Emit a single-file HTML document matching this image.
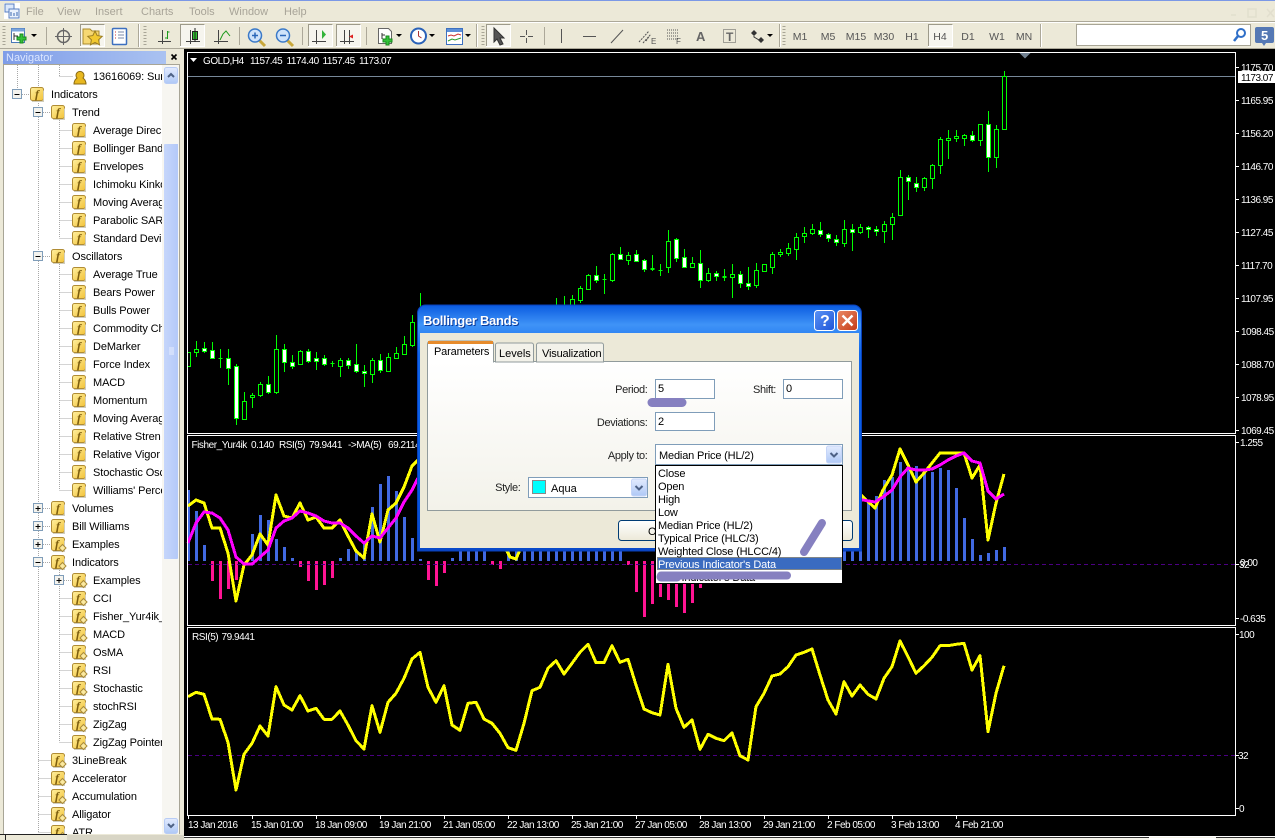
<!DOCTYPE html>
<html>
<head>
<meta charset="utf-8">
<title>Bollinger Bands</title>
<style>
html,body{margin:0;padding:0;background:#ece9d8;overflow:hidden;width:1275px;height:840px}
svg{display:block}
text{font-family:"Liberation Sans",sans-serif;font-size:11px;fill:#000;white-space:pre}
.m{fill:#a8a498}
.n{letter-spacing:-.1px}
.c{fill:#fff;font-size:10px;letter-spacing:-.5px}
.h{fill:#fff;font-size:10px;letter-spacing:-.45px}
.tf{fill:#555;font-size:10.5px;text-anchor:middle}
.l{letter-spacing:-.16px}
.r{text-anchor:end;fill:#222;letter-spacing:-.35px}
.fi{font-family:"Liberation Serif",serif;font-style:italic;font-weight:bold;font-size:12px;fill:#7d5e0e;text-anchor:middle}
.cr{shape-rendering:crispEdges}
</style>
</head>
<body>
<svg width="1275" height="840" viewBox="0 0 1275 840" xmlns="http://www.w3.org/2000/svg">
<defs>
<linearGradient id="yg" x1="0" y1="0" x2="1" y2="1"><stop offset="0" stop-color="#fff0a0"/><stop offset="1" stop-color="#f2c238"/></linearGradient>
<linearGradient id="tb" x1="0" y1="0" x2="0" y2="1"><stop offset="0" stop-color="#0a5be0"/><stop offset=".08" stop-color="#3f93f7"/><stop offset=".2" stop-color="#0f66ea"/><stop offset=".75" stop-color="#0258e2"/><stop offset="1" stop-color="#0a49c8"/></linearGradient>
<linearGradient id="nh" x1="0" y1="0" x2="1" y2="0"><stop offset="0" stop-color="#7f9de8"/><stop offset="1" stop-color="#aac2f1"/></linearGradient>
<linearGradient id="sb" x1="0" y1="0" x2="1" y2="0"><stop offset="0" stop-color="#c6d6fb"/><stop offset="1" stop-color="#b4c9f8"/></linearGradient>
<linearGradient id="cb" x1="0" y1="0" x2="0" y2="1"><stop offset="0" stop-color="#e3ebfe"/><stop offset="1" stop-color="#aec8f6"/></linearGradient>
<linearGradient id="pn" x1="0" y1="0" x2="0" y2="1"><stop offset="0" stop-color="#fff"/><stop offset="1" stop-color="#f3f2ea"/></linearGradient>
<linearGradient id="hb" x1="0" y1="0" x2="1" y2="1"><stop offset="0" stop-color="#5a93f5"/><stop offset="1" stop-color="#1f55d8"/></linearGradient>
<linearGradient id="xb" x1="0" y1="0" x2="1" y2="1"><stop offset="0" stop-color="#ea8a66"/><stop offset="1" stop-color="#c43a17"/></linearGradient>
<linearGradient id="bt" x1="0" y1="0" x2="0" y2="1"><stop offset="0" stop-color="#fff"/><stop offset="1" stop-color="#ece9d8"/></linearGradient>
<clipPath id="tc"><rect x="4" y="65" width="158" height="769"/></clipPath>
<clipPath id="cc"><rect x="188" y="53" width="1047" height="380"/></clipPath>
<g id="f"><rect x="-6.5" y="-6.5" width="13" height="13" rx="2" fill="url(#yg)" stroke="#b08c34"/><path d="M-5 7.5h11.5v-11" fill="none" stroke="#d0cdbd"/><text class="fi" x="0" y="4">f</text></g>
<g id="g"><rect x="-6.5" y="-6.5" width="13" height="13" rx="2" fill="url(#yg)" stroke="#b08c34"/><path d="M-5 7.5h11.5v-11" fill="none" stroke="#d0cdbd"/><text class="fi" x="-1" y="4">f</text><path d="M4.5 .5l3.500 3.500-3.500 3.500-3.500-3.500z" fill="#fbe9a0" stroke="#a88a3a"/></g>
<g id="mi"><rect x="-4.5" y="-4.5" width="9" height="9" fill="#f4f3ee" stroke="#7f9db9"/><path d="M-2.5 .5h5" stroke="#000" class="cr"/></g>
<g id="pl"><rect x="-4.5" y="-4.5" width="9" height="9" fill="#f4f3ee" stroke="#7f9db9"/><path d="M-2.5 .5h5M0 -2v5" stroke="#000" class="cr"/></g>
<g id="ab"><rect x="-7" y="-8.5" width="15" height="17" rx="2" fill="url(#cb)" stroke="#c5d5f8"/><path d="M-3 -1.5l3.500 3.500 3.500-3.500" fill="none" stroke="#4d6185" stroke-width="2"/></g>
</defs>

<rect width="1275" height="840" fill="#ece9d8"/>
<rect width="1275" height="1" fill="#7b98e6"/>

<!-- app icon -->
<rect x="4" y="3" width="16" height="16" fill="#fff"/>
<rect x="5" y="4" width="9" height="8" fill="#dce8fb" stroke="#5a7fc0"/>
<rect x="9" y="9" width="10" height="9" fill="#eaf1fd" stroke="#5a7fc0"/>
<path d="M11 12v4M14 13v3M17 12v4" stroke="#3a66b0"/>

<!-- menu -->
<text class="m" x="26" y="15">File</text>
<text class="m" x="57" y="15">View</text>
<text class="m" x="95" y="15">Insert</text>
<text class="m" x="141" y="15">Charts</text>
<text class="m" x="189" y="15">Tools</text>
<text class="m" x="229" y="15">Window</text>
<text class="m" x="284" y="15">Help</text>

<!-- window buttons faint -->
<g fill="none" stroke="#e2dfce" stroke-width="1.500">
<path d="M1231 15h5"/><rect x="1248" y="9" width="8" height="8"/><path d="M1267 9l7 8M1274 9l-7 8"/>
</g>

<!-- toolbar -->
<path class="cr" d="M0 21.500H1275" stroke="#aca899"/>
<path class="cr" d="M0 22.500H1275" stroke="#fff"/>
<path class="cr" d="M0 48.500H1275" stroke="#aca899"/>
<g class="cr" stroke="#aca899">
<path d="M46.500 27v18M138.500 24v23M239.500 27v18M302.500 27v18M366.500 27v18M476.500 24v23M544.500 27v18M779.500 24v23M1040.500 24v23"/>
</g>
<path class="cr" d="M139.500 24v23M477.500 24v23M780.500 24v23M1041.500 24v23" stroke="#fff"/>
<g stroke="#a8a596" stroke-width="3" stroke-dasharray="1 2" class="cr">
<path d="M4 26v20M145 26v20M483 26v20M784 26v20"/>
</g>
<!-- active buttons -->
<g class="cr" fill="#f6f5ee" stroke="#fff">
<rect x="80.500" y="24.500" width="24" height="22"/><rect x="180.500" y="24.500" width="24" height="22"/>
<rect x="308.500" y="24.500" width="24" height="22"/><rect x="336.500" y="24.500" width="24" height="22"/>
<rect x="486.500" y="24.500" width="24" height="22"/><rect x="928.500" y="24.500" width="24" height="22"/>
</g>
<path class="cr" fill="none" stroke="#9d9a8a" d="M80.500 46v-21.500h24M180.500 46v-21.500h24M308.500 46v-21.500h24M336.500 46v-21.500h24M486.500 46v-21.500h24M928.500 46v-21.500h24"/>

<!-- new chart -->
<g><path d="M11.500 28.500h13v14h-13z" fill="#fff" stroke="#4a78b8"/><path d="M11.500 28.500h13v3h-13z" fill="#7aa4dc"/><path d="M14 33v7M14 36h4" stroke="#333"/><path d="M21 33h3v3h3v3h-3v3h-3v-3h-3v-3h3z" transform="translate(-1 1)" fill="#33c23a" stroke="#178a1e"/><path d="M31 34h6l-3 3z" fill="#000"/></g>
<!-- crosshair -->
<g fill="none" stroke="#666"><circle cx="63.500" cy="36.500" r="6" stroke-width="1.500"/><path d="M63.500 28v17M55 36.500h17"/></g>
<!-- folder star -->
<path d="M83 29h7l2 2h7v13H83z" fill="#f6d873" stroke="#a98a2c"/><path d="M95 31l2.200 4.600 5 .7-3.600 3.500.9 5-4.500-2.400-4.500 2.400.9-5-3.600-3.500 5-.7z" fill="#f2c930" stroke="#9a7d22"/>
<!-- book -->
<rect x="112.500" y="28.500" width="14" height="16" rx="1" fill="#fff" stroke="#3d70c0" stroke-width="1.500"/><path d="M115 32h1M115 35h1M115 38h1" stroke="#c33" /><path d="M118 32h6M118 35h6M118 38h6" stroke="#7a8aa8"/>
<!-- chart types -->
<g stroke="#444" fill="none" class="cr">
<path d="M162.500 30v14M158 41.500h13"/><path d="M190.500 30v14M186 41.500h14"/><path d="M218.500 30v14M214 41.500h14"/>
<path d="M316.500 30v14M312 41.500h14"/><path d="M344.500 30v14M340 41.500h14"/><path d="M349.500 30v14"/>
</g>
<path d="M167.500 31v8M165 38h2.500M167.500 32h2" stroke="#1b9a1b" fill="none" class="cr"/>
<rect x="192.500" y="31.500" width="5" height="8" fill="#2cc22c" stroke="#222" class="cr"/><path d="M195 28v14" stroke="#222" class="cr"/>
<path d="M220 40l3-6 3-3 4 5" fill="none" stroke="#1b9a1b"/>
<path d="M322 30l4 4.500-4 4.500z" fill="#33b33a"/>
<path d="M353 34.500l-4 2 4 2z" fill="#d22"/>
<!-- zoom -->
<g><path d="M259 40l6 6" stroke="#c8a73a" stroke-width="3"/><circle cx="255" cy="35.500" r="6.500" fill="#cfe3fa" stroke="#3a79c8" stroke-width="1.500"/><path d="M252 35.500h6M255 32.500v6" stroke="#2a66b8" stroke-width="1.500"/></g>
<g><path d="M287 40l6 6" stroke="#c8a73a" stroke-width="3"/><circle cx="283" cy="35.500" r="6.500" fill="#cfe3fa" stroke="#3a79c8" stroke-width="1.500"/><path d="M280 35.500h6" stroke="#2a66b8" stroke-width="1.500"/></g>
<!-- new indicator -->
<g><path d="M378.500 28.500h10l3 3v12h-13z" fill="#fff" stroke="#666"/><path d="M382 33v6M382 35h3" stroke="#333"/><path d="M386 36h3v3h3v3h-3v3h-3v-3h-3v-3h3z" fill="#33c23a" stroke="#178a1e"/><path d="M396 34h6l-3 3z" fill="#000"/></g>
<!-- clock -->
<g><circle cx="418.500" cy="36" r="7.500" fill="#fff" stroke="#2a62b8" stroke-width="2"/><path d="M418.500 31v5l3 2" fill="none" stroke="#a33" /><path d="M429 34h6l-3 3z" fill="#000"/></g>
<!-- template -->
<g><rect x="446.500" y="28.500" width="16" height="16" fill="#fff" stroke="#3d70c0"/><rect x="447" y="29" width="15" height="3" fill="#5c8fd8"/><path d="M448 36l3-1 3 1 4-2 3 1" fill="none" stroke="#c33"/><path d="M448 41l4-2 3 1 6-2" fill="none" stroke="#2a9a2a"/><path d="M465 34h6l-3 3z" fill="#000"/></g>
<!-- cursor -->
<path d="M494 28v14l3-3 3 6 3-1-3-6h4z" fill="#555" stroke="#333"/>
<!-- drawing tools -->
<g stroke="#555" fill="none">
<path d="M526.500 30v13M520 36.500h14" stroke-dasharray="5 3"/>
<path class="cr" d="M561.500 29v14M583 36.500h13"/><path d="M611 43l12-13"/>
<path d="M639 42l10-11M643 43l8-9M646 41l4-6" stroke-dasharray="2 1"/>
<path d="M667 30h11M667 33h11M667 36h11M667 39h11" stroke-dasharray="1 1" class="cr"/>
<rect x="723.500" y="29.500" width="12" height="13" stroke-dasharray="1 1" class="cr"/>
</g>
<text x="651" y="44" style="font-size:8px;fill:#555">E</text>
<text x="676" y="44" style="font-size:8px;fill:#555">F</text>
<text x="696" y="41" style="font-size:13px;fill:#666;font-weight:bold">A</text>
<text x="726" y="41" style="font-size:12px;font-weight:bold;fill:#666">T</text>
<path d="M754 30l3 3-3 3-3-3zM761 37l3 3-3 3-3-3z" fill="#333"/><path d="M754 36v1l5 3" stroke="#333" fill="none"/><path d="M767 34h6l-3 3z" fill="#000"/>
<!-- timeframes -->
<text class="tf" x="800" y="40">M1</text><text class="tf" x="828" y="40">M5</text><text class="tf" x="856" y="40">M15</text><text class="tf" x="884" y="40">M30</text><text class="tf" x="912" y="40">H1</text><text class="tf" x="940" y="40">H4</text><text class="tf" x="968" y="40">D1</text><text class="tf" x="997" y="40">W1</text><text class="tf" x="1024" y="40">MN</text>
<!-- search -->
<rect class="cr" x="1076.500" y="24.500" width="174" height="21" fill="#fff" stroke="#a8a596"/>
<circle cx="1241" cy="33" r="4" fill="#fff" stroke="#2f6fc8" stroke-width="2"/><path d="M1238 36l-4 5" stroke="#2f6fc8" stroke-width="2.500"/>
<path d="M1257 27h15a2 2 0 0 1 2 2v12a2 2 0 0 1-2 2h-6l-2 3-2-3h-5a2 2 0 0 1-2-2V29a2 2 0 0 1 2-2z" fill="#5578b4"/>
<text x="1261" y="40" style="font-size:13px;font-weight:bold;fill:#fff">5</text>

<!-- black chart area -->
<rect class="cr" x="184" y="49" width="1091" height="787" fill="#000"/>
<g clip-path="url(#cc)">
<path class="cr" d="M188 76.500H1235" stroke="#778899"/>
<path class="cr" fill="none" stroke="#0f0" d="M196.500 341V357M204.500 342V353M212.500 342V359M220.500 349V368M228.500 349V385M236.500 364V425M244.500 392V420M252.500 393V408M260.500 382V397M268.500 376V394M276.500 335V394M284.500 344V372M292.500 355V369M300.500 350V365M308.500 349V363M316.500 352V370M324.500 355V366M332.500 361V367M340.500 358V377M348.500 358V369M356.500 344V373M364.500 365V387M372.500 358V383M380.500 354V373M388.500 353V371M396.500 347V358M404.500 336V354M412.500 315V347M420.500 293V307M556.500 298V307M564.500 296V307M572.500 295V307M580.500 286V303M588.500 274V290M596.500 266V283M604.500 274V294M612.500 253V282M620.500 247V259M628.500 252V265M636.500 250V262M644.500 259V272M652.500 255V271M660.500 264V276M668.500 230V273M676.500 238V262M684.500 249V268M692.500 257V268M700.500 250V288M708.500 268V282M716.500 271V281M724.500 269V281M732.500 264V298M740.500 271V288M748.500 267V290M756.500 263V288M764.500 264V271M772.500 252V274M780.500 249V257M788.500 243V256M796.500 233V260M804.500 227V243M812.500 224V235M820.500 222V237M828.500 233V242M836.500 235V246M844.500 220V247M852.500 224V251M860.500 224V234M868.500 226V238M876.500 226V236M884.500 221V243M892.500 213V240M900.500 170V215M908.500 175V200M916.500 177V192M924.500 177V191M932.500 164V189M940.500 137V174M948.500 130V159M956.500 130V142M964.500 134V146M972.500 131V142M980.500 124V146M988.500 111V172M996.500 125V168M1004.500 71V129M187.500 352V375"/>
<path class="cr" fill="none" stroke="#0f0" d="M218.500 358.500h4M330.500 363.500h4M602.500 279.500h4M650.500 268.500h4M650.500 269.500h4M658.500 270.500h4M722.500 276.500h4M722.500 277.500h4"/>
<path class="cr" fill="#000" stroke="#0f0" d="M186.500 352.500h4v14h-4zM194.500 349.500h4v3h-4zM242.500 401.500h4v18h-4zM250.500 395.500h4v2h-4zM258.500 384.500h4v11h-4zM274.500 349.500h4v43h-4zM298.500 351.500h4v13h-4zM338.500 360.500h4v6h-4zM370.500 360.500h4v14h-4zM386.500 357.500h4v14h-4zM394.500 353.500h4v5h-4zM402.500 344.500h4v10h-4zM410.500 322.500h4v23h-4zM570.500 299.500h4v8h-4zM578.500 288.500h4v12h-4zM586.500 275.500h4v14h-4zM610.500 254.500h4v26h-4zM626.500 255.500h4v5h-4zM666.500 241.500h4v26h-4zM690.500 263.500h4v4h-4zM706.500 273.500h4v7h-4zM730.500 274.500h4v3h-4zM754.500 270.500h4v15h-4zM762.500 264.500h4v7h-4zM770.500 254.500h4v13h-4zM778.500 252.500h4v2h-4zM786.500 248.500h4v5h-4zM794.500 237.500h4v12h-4zM802.500 233.500h4v3h-4zM810.500 229.500h4v4h-4zM842.500 229.500h4v14h-4zM858.500 227.500h4v5h-4zM882.500 224.500h4v7h-4zM890.500 217.500h4v7h-4zM898.500 177.500h4v38h-4zM922.500 178.500h4v9h-4zM930.500 165.500h4v13h-4zM938.500 139.500h4v26h-4zM946.500 138.500h4v2h-4zM954.500 136.500h4v2h-4zM962.500 135.500h4v3h-4zM978.500 124.500h4v16h-4zM994.500 129.500h4v28h-4zM1002.500 76.500h4v53h-4z"/>
<path class="cr" fill="#fff" stroke="#0f0" d="M202.500 348.500h4v3h-4zM210.500 350.500h4v8h-4zM226.500 358.500h4v10h-4zM234.500 366.500h4v52h-4zM266.500 384.500h4v8h-4zM282.500 349.500h4v13h-4zM290.500 362.500h4v4h-4zM306.500 351.500h4v10h-4zM314.500 358.500h4v3h-4zM322.500 358.500h4v6h-4zM346.500 360.500h4v5h-4zM354.500 364.500h4v7h-4zM362.500 371.500h4v2h-4zM378.500 360.500h4v10h-4zM594.500 275.500h4v5h-4zM618.500 254.500h4v5h-4zM634.500 254.500h4v7h-4zM642.500 260.500h4v9h-4zM674.500 239.500h4v19h-4zM682.500 257.500h4v10h-4zM698.500 263.500h4v17h-4zM714.500 273.500h4v3h-4zM738.500 274.500h4v9h-4zM746.500 283.500h4v3h-4zM818.500 230.500h4v4h-4zM826.500 234.500h4v4h-4zM834.500 239.500h4v3h-4zM850.500 229.500h4v3h-4zM866.500 227.500h4v2h-4zM874.500 229.500h4v2h-4zM906.500 177.500h4v4h-4zM914.500 183.500h4v4h-4zM970.500 135.500h4v5h-4zM986.500 124.500h4v33h-4z"/>
</g>
<path d="M1019 52.500h12l-6 6z" fill="#708090"/>

<!-- sub 1 -->
<path class="cr" fill="none" stroke="#4169e1" stroke-width="3" d="M188.500 490V561M196.500 511V561M204.500 545V561M252.500 534V561M260.500 515V561M268.500 520V561M276.500 539V561M284.500 547V561M292.500 558V561M340.500 558V561M348.500 549V561M356.500 551V561M364.500 543V561M372.500 507V561M380.500 484V561M388.500 476V561M396.500 491V561M404.500 517V561M412.500 538V561M420.500 559V561M452.500 558V561M460.500 545V561M468.500 545V561M476.500 545V561M484.500 545V561M508.500 545V561M516.500 545V561M524.500 545V561M532.500 545V561M540.500 545V561M548.500 545V561M556.500 545V561M564.500 545V561M572.500 545V561M580.500 545V561M588.500 545V561M596.500 545V561M604.500 545V561M612.500 545V561M620.500 545V561M844.500 540V561M852.500 540V561M860.500 540V561M868.500 502V561M876.500 496V561M884.500 480V561M892.500 477V561M900.500 462V561M908.500 468V561M916.500 466V561M924.500 470V561M932.500 472V561M940.500 468V561M948.500 470V561M956.500 488V561M964.500 518V561M972.500 539V561M980.500 555V561M988.500 553V561M996.500 550V561M1004.500 547V561"/>
<path class="cr" fill="none" stroke="#ff1493" stroke-width="3" d="M212.500 561V581M220.500 561V599M228.500 561V589M236.500 561V580M300.500 561V567M308.500 561V581M316.500 561V590M324.500 561V585M332.500 561V578M428.500 561V580M436.500 561V586M444.500 561V573M492.500 561V565M500.500 561V569M628.500 561V565M636.500 561V592M644.500 561V617M652.500 561V604M660.500 561V597M668.500 561V600M676.500 561V607M684.500 561V613M692.500 561V603M700.500 561V588"/>
<path class="cr" d="M188 564.500H1235M188 755.500H1235" stroke="#4b0082" stroke-dasharray="4 3"/>
<g class="cr" fill="none" stroke-width="3" stroke-linejoin="round">
<polyline stroke="#ff0" points="188,506 196,500 204,503 212,528 220,528 228,553 236,601 244,565 252,555 260,534 268,545 276,495 284,516 292,518 300,503 308,520 316,517 324,528 332,528 340,520 348,536 356,551 364,558 372,514 380,542 388,510 396,503 404,487 412,466 418,460"/>
<polyline stroke="#ff0" points="504,545 510,557 516,559 522,545"/>
<polyline stroke="#ff0" points="860,494 863,497 875,508 883,490 892,475 900,449 908,465 916,482 924,473 932,463 940,453 948,453 956,453 964,453 972,478 980,465 988,540 996,503 1004,474"/>
<polyline stroke="#f0f" points="188,543 196,523 204,512 212,513 220,518 228,530 236,557 244,564 252,564 260,557 268,550 276,528 284,521 292,518 300,511 308,513 316,516 324,521 332,523 340,523 348,528 356,536 364,543 372,536 380,538 388,528 396,518 404,502 412,490 418,478"/>
<polyline stroke="#f0f" points="860,500 863,500 875,502 883,497 892,490 900,477 908,468 916,470 924,470 932,469 940,465 948,460 956,456 964,453 972,461 980,463 988,491 996,499 1004,494"/>
<polyline stroke="#ff0" points="188,696.700 196,692.300 204,694.300 212,719 220,719.300 228,742.300 236,790 244,754.300 252,743.300 260,726 268,736 276,686.700 284,705 292,710 300,695.700 308,711 316,708.300 324,719.300 332,719.300 340,711 348,725 356,740.700 364,749 372,705.700 380,732.300 388,702.300 396,693.300 404,678.300 412,659 420,652.300 428,687.300 436,702.300 444,685.700 452,725 460,730.300 468,703.300 476,702.300 484,719 492,723.300 500,733.300 508,747.700 516,750.300 524,723.300 532,690.700 540,687.300 548,668.300 556,660.700 564,674 572,663.300 580,652.300 588,644.300 596,662.700 604,662.700 612,645.700 620,662.300 628,659.300 636,685 644,709 652,712.700 660,715 668,664.300 676,708.300 684,727.300 692,720 700,749.300 708,734.300 716,738.300 724,740.700 732,733 740,755.700 748,760 756,706.700 764,693.300 772,676 780,674 788,666.700 796,655 804,652.300 812,649 820,675 828,700 836,714 844,681.700 852,696 860,685 868,694.300 876,699 884,678.300 892,666.700 900,641 908,656.700 916,673.300 924,665.700 932,657.300 940,645.700 948,645.700 956,644.300 964,643.300 972,670 980,655.700 988,731.700 996,693.300 1004,665.700"/>
</g>

<!-- frames -->
<g class="cr" fill="none" stroke="#fff">
<rect x="187.500" y="52.500" width="1048" height="381"/>
<rect x="187.500" y="435.500" width="1048" height="190"/>
<rect x="187.500" y="627.500" width="1048" height="188"/>
<path d="M1236 67.500h3M1236 100.500h3M1236 133.500h3M1236 166.500h3M1236 199.500h3M1236 232.500h3M1236 265.500h3M1236 298.500h3M1236 331.500h3M1236 364.500h3M1236 397.500h3M1236 430.500h3M1236 442.500h3M1236 564.500h3M1236 618.500h3M1236 634.500h3M1236 755.500h3M1236 808.500h3"/>
<path d="M188.500 816v3M252.500 816v3M316.500 816v3M380.500 816v3M444.500 816v3M508.500 816v3M572.500 816v3M636.500 816v3M700.500 816v3M764.500 816v3M828.500 816v3M892.500 816v3M956.500 816v3"/>
</g>
<rect x="1238" y="71" width="37" height="12" fill="#fff"/>

<!-- chart labels -->
<path d="M190 58h7l-3.500 4z" fill="#fff"/>
<text class="h" y="64"><tspan x="203">GOLD,H4</tspan><tspan x="250">1157.45</tspan><tspan x="286.500">1174.40</tspan><tspan x="322.500">1157.45</tspan><tspan x="359">1173.07</tspan></text>
<text class="h" y="448"><tspan x="191.500">Fisher_Yur4ik</tspan><tspan x="251">0.140</tspan><tspan x="279">RSI(5)</tspan><tspan x="309">79.9441</tspan><tspan x="348">-&gt;MA(5)</tspan><tspan x="388">69.2114</tspan></text>
<text class="h" y="640"><tspan x="192">RSI(5)</tspan><tspan x="221.500">79.9441</tspan></text>
<g>
<text class="c" x="1241" y="71">1175.70</text>
<text class="c" x="1241" y="81" style="fill:#000">1173.07</text>
<text class="c" x="1241" y="104">1165.95</text>
<text class="c" x="1241" y="137">1156.20</text>
<text class="c" x="1241" y="170">1146.70</text>
<text class="c" x="1241" y="203">1136.95</text>
<text class="c" x="1241" y="236">1127.45</text>
<text class="c" x="1241" y="269">1117.70</text>
<text class="c" x="1241" y="302">1107.95</text>
<text class="c" x="1241" y="335">1098.45</text>
<text class="c" x="1241" y="368">1088.70</text>
<text class="c" x="1241" y="401">1078.95</text>
<text class="c" x="1241" y="434">1069.45</text>
<text class="c" x="1240" y="446">1.255</text>
<text class="c" x="1240" y="566">0.00</text>
<text class="c" x="1239" y="568">32</text>
<text class="c" x="1240" y="622">-0.635</text>
<text class="c" x="1239" y="638">100</text>
<text class="c" x="1238" y="759">32</text>
<text class="c" x="1239" y="812">0</text>
</g>
<g>
<text class="c" x="188" y="828">13 Jan 2016</text>
<text class="c" x="251" y="828">15 Jan 01:00</text>
<text class="c" x="315" y="828">18 Jan 09:00</text>
<text class="c" x="379" y="828">19 Jan 21:00</text>
<text class="c" x="443" y="828">21 Jan 05:00</text>
<text class="c" x="507" y="828">22 Jan 13:00</text>
<text class="c" x="571" y="828">25 Jan 21:00</text>
<text class="c" x="635" y="828">27 Jan 05:00</text>
<text class="c" x="699" y="828">28 Jan 13:00</text>
<text class="c" x="763" y="828">29 Jan 21:00</text>
<text class="c" x="827" y="828">2 Feb 05:00</text>
<text class="c" x="891" y="828">3 Feb 13:00</text>
<text class="c" x="955" y="828">4 Feb 21:00</text>
</g>

<!-- bottom strip -->
<rect class="cr" x="0" y="836" width="1275" height="4" fill="#f5f4ea"/>
<path class="cr" d="M184 836.500H1275" stroke="#fff"/>
<path class="cr" d="M184 837.500H1149M1216 837.500H1275" stroke="#333"/>
<rect class="cr" x="1149" y="838" width="67" height="2" fill="#fff"/>

<!-- navigator -->
<rect class="cr" x="3" y="51" width="163" height="13" fill="url(#nh)"/>
<text x="6" y="61" style="fill:#dbe6ff">Navigator</text>
<path d="M171.500 54.500l5 5M176.500 54.500l-5 5" stroke="#000" stroke-width="1.600"/>
<rect class="cr" x="3.500" y="64.500" width="176" height="771" fill="#fff" stroke="#a8a596"/>
<rect class="cr" x="162" y="65" width="17" height="770" fill="#f7f6f1"/>
<rect class="cr" x="164" y="144" width="14" height="415" rx="1" fill="url(#sb)"/>
<path class="cr" d="M169 348h5M169 350h5M169 352h5M169 354h5" stroke="#e8eefd"/>
<rect x="164.500" y="67.500" width="13" height="16" rx="2" fill="url(#cb)" stroke="#b8ccf5"/>
<path d="M168 77l3-3 3 3" fill="none" stroke="#4d6185" stroke-width="2"/>
<rect x="164.500" y="818.500" width="13" height="15" rx="2" fill="url(#cb)" stroke="#b8ccf5"/>
<path d="M168 824l3 3 3-3" fill="none" stroke="#4d6185" stroke-width="2"/>

<g clip-path="url(#tc)">
<!-- tree lines -->
<g class="cr" stroke="#a8a8a8" stroke-dasharray="1 1" fill="none">
<path d="M17.500 65v25M38.500 65v767M59.500 65v11M59.500 120v118M59.500 264v226M59.500 568v174"/>
<path d="M59.500 76.500h13M22 94.500h8M43 112.500h8M59.500 130.500h13M59.500 148.500h13M59.500 166.500h13M59.500 184.500h13M59.500 202.500h13M59.500 220.500h13M59.500 238.500h13M43 256.500h8M59.500 274.500h13M59.500 292.500h13M59.500 310.500h13M59.500 328.500h13M59.500 346.500h13M59.500 364.500h13M59.500 382.500h13M59.500 400.500h13M59.500 418.500h13M59.500 436.500h13M59.500 454.500h13M59.500 472.500h13M59.500 490.500h13M43 508.500h8M43 526.500h8M43 544.500h8M43 562.500h8M64 580.500h8M59.500 598.500h13M59.500 616.500h13M59.500 634.500h13M59.500 652.500h13M59.500 670.500h13M59.500 688.500h13M59.500 706.500h13M59.500 724.500h13M59.500 742.500h13M38.500 760.500h13M38.500 778.500h13M38.500 796.500h13M38.500 814.500h13M38.500 832.500h13"/>
</g>
<!-- boxes -->
<use href="#mi" x="17" y="94"/><use href="#mi" x="38" y="112"/><use href="#mi" x="38" y="256"/><use href="#pl" x="38" y="508"/><use href="#pl" x="38" y="526"/><use href="#pl" x="38" y="544"/><use href="#mi" x="38" y="562"/><use href="#pl" x="59" y="580"/>
<!-- user icon -->
<path d="M74 84c0-4 2-5 3-6a4 4 0 1 1 6 0c1 1 3 2 3 6z" fill="#e8b820" stroke="#8a6a14"/>
<!-- icons -->
<use href="#f" x="37" y="94"/><use href="#f" x="58" y="112"/>
<use href="#f" x="79" y="130"/><use href="#f" x="79" y="148"/><use href="#f" x="79" y="166"/><use href="#f" x="79" y="184"/><use href="#f" x="79" y="202"/><use href="#f" x="79" y="220"/><use href="#f" x="79" y="238"/>
<use href="#f" x="58" y="256"/>
<use href="#f" x="79" y="274"/><use href="#f" x="79" y="292"/><use href="#f" x="79" y="310"/><use href="#f" x="79" y="328"/><use href="#f" x="79" y="346"/><use href="#f" x="79" y="364"/><use href="#f" x="79" y="382"/><use href="#f" x="79" y="400"/><use href="#f" x="79" y="418"/><use href="#f" x="79" y="436"/><use href="#f" x="79" y="454"/><use href="#f" x="79" y="472"/><use href="#f" x="79" y="490"/>
<use href="#f" x="58" y="508"/><use href="#f" x="58" y="526"/><use href="#g" x="58" y="544"/><use href="#g" x="58" y="562"/>
<use href="#g" x="79" y="580"/><use href="#g" x="79" y="598"/><use href="#g" x="79" y="616"/><use href="#g" x="79" y="634"/><use href="#g" x="79" y="652"/><use href="#g" x="79" y="670"/><use href="#g" x="79" y="688"/><use href="#g" x="79" y="706"/><use href="#g" x="79" y="724"/><use href="#g" x="79" y="742"/>
<use href="#g" x="58" y="760"/><use href="#g" x="58" y="778"/><use href="#g" x="58" y="796"/><use href="#g" x="58" y="814"/><use href="#g" x="58" y="832"/>
<!-- labels -->
<g class="tree">
<text class="n" x="93" y="80">13616069: Sun</text>
<text class="n" x="51" y="98">Indicators</text>
<text class="n" x="72" y="116">Trend</text>
<text class="n" x="93" y="134">Average Direc</text>
<text class="n" x="93" y="152">Bollinger Bands</text>
<text class="n" x="93" y="170">Envelopes</text>
<text class="n" x="93" y="188">Ichimoku Kinko</text>
<text class="n" x="93" y="206">Moving Averag</text>
<text class="n" x="93" y="224">Parabolic SAR</text>
<text class="n" x="93" y="242">Standard Devi</text>
<text class="n" x="72" y="260">Oscillators</text>
<text class="n" x="93" y="278">Average True</text>
<text class="n" x="93" y="296">Bears Power</text>
<text class="n" x="93" y="314">Bulls Power</text>
<text class="n" x="93" y="332">Commodity Ch</text>
<text class="n" x="93" y="350">DeMarker</text>
<text class="n" x="93" y="368">Force Index</text>
<text class="n" x="93" y="386">MACD</text>
<text class="n" x="93" y="404">Momentum</text>
<text class="n" x="93" y="422">Moving Averag</text>
<text class="n" x="93" y="440">Relative Stren</text>
<text class="n" x="93" y="458">Relative Vigor</text>
<text class="n" x="93" y="476">Stochastic Osc</text>
<text class="n" x="93" y="494">Williams' Perce</text>
<text class="n" x="72" y="512">Volumes</text>
<text class="n" x="72" y="530">Bill Williams</text>
<text class="n" x="72" y="548">Examples</text>
<text class="n" x="72" y="566">Indicators</text>
<text class="n" x="93" y="584">Examples</text>
<text class="n" x="93" y="602">CCI</text>
<text class="n" x="93" y="620">Fisher_Yur4ik_</text>
<text class="n" x="93" y="638">MACD</text>
<text class="n" x="93" y="656">OsMA</text>
<text class="n" x="93" y="674">RSI</text>
<text class="n" x="93" y="692">Stochastic</text>
<text class="n" x="93" y="710">stochRSI</text>
<text class="n" x="93" y="728">ZigZag</text>
<text class="n" x="93" y="746">ZigZag Pointer</text>
<text class="n" x="72" y="764">3LineBreak</text>
<text class="n" x="72" y="782">Accelerator</text>
<text class="n" x="72" y="800">Accumulation</text>
<text class="n" x="72" y="818">Alligator</text>
<text class="n" x="72" y="836">ATR</text>
</g>
</g>
<rect class="cr" x="0" y="834" width="184" height="6" fill="#ece9d8"/>
<path class="cr" d="M5.500 834v6M0 834.500H67" stroke="#222"/>
<rect class="cr" x="67" y="835" width="117" height="5" fill="#d8d5c5"/>

<!-- dialog -->
<path d="M417.500 313a8 8 0 0 1 8-8h428a8 8 0 0 1 8 8v238h-444z" fill="url(#tb)" stroke="#0a3fb8"/>
<rect class="cr" x="420" y="333" width="439" height="215" fill="#ece9d8"/>
<text x="424" y="326" style="font-size:13px;font-weight:bold;fill:#0a3a9a;letter-spacing:-.3px">Bollinger Bands</text>
<text x="423" y="325" style="font-size:13px;font-weight:bold;fill:#fff;letter-spacing:-.3px">Bollinger Bands</text>
<rect x="814.500" y="310.500" width="20" height="20" rx="3" fill="url(#hb)" stroke="#fff"/>
<text x="820" y="326" style="font-size:16px;font-weight:bold;fill:#fff">?</text>
<rect x="837.500" y="310.500" width="20" height="20" rx="3" fill="url(#xb)" stroke="#fff"/>
<path d="M842.500 315.500l10 10M852.500 315.500l-10 10" stroke="#fff" stroke-width="2.400"/>

<!-- tabs -->
<rect class="cr" x="427.500" y="361.500" width="424" height="149" fill="url(#pn)" stroke="#919b9c"/>
<path d="M495.500 362v-17a2 2 0 0 1 2-2h34a2 2 0 0 1 2 2v17z" fill="#f3f2ea" stroke="#919b9c"/>
<path d="M536.500 362v-17a2 2 0 0 1 2-2h63a2 2 0 0 1 2 2v17z" fill="#f3f2ea" stroke="#919b9c"/>
<path d="M427.500 362v-18a3 3 0 0 1 3-3h60a3 3 0 0 1 3 3v18z" fill="#fff" stroke="#919b9c"/>
<rect x="428" y="341" width="65" height="3" fill="#e68b2c"/>
<rect class="cr" x="428" y="360" width="65" height="3" fill="#fff"/>
<text class="l" x="434" y="355">Parameters</text>
<text x="499" y="357">Levels</text>
<text class="l" x="542" y="357">Visualization</text>

<!-- fields -->
<text class="r" x="647.500" y="393">Period:</text>
<rect class="cr" x="655.500" y="379.500" width="59" height="19" fill="#fff" stroke="#7f9db9"/>
<text x="658" y="392">5</text>
<text class="r" x="776" y="393">Shift:</text>
<rect class="cr" x="783.500" y="379.500" width="59" height="19" fill="#fff" stroke="#7f9db9"/>
<text x="786" y="392">0</text>
<text class="r" x="647.500" y="426">Deviations:</text>
<rect class="cr" x="655.500" y="412.500" width="59" height="18" fill="#fff" stroke="#7f9db9"/>
<text x="658" y="425">2</text>
<text class="r" x="647.500" y="459">Apply to:</text>
<rect class="cr" x="655.500" y="444.500" width="187" height="20" fill="#fff" stroke="#7f9db9"/>
<text class="l" x="659" y="459">Median Price (HL/2)</text>
<use href="#ab" x="833.500" y="454.500"/>
<text class="r" x="520.500" y="491">Style:</text>
<rect class="cr" x="528.500" y="477.500" width="119" height="20" fill="#fff" stroke="#7f9db9"/>
<rect class="cr" x="532.500" y="480.500" width="13" height="13" fill="#0ff" stroke="#8a8a8a"/>
<text x="551" y="492">Aqua</text>
<use href="#ab" x="638.500" y="487.500"/>

<!-- buttons -->
<rect x="618.500" y="520.500" width="75" height="20" rx="3" fill="url(#bt)" stroke="#003c74"/>
<rect x="778.500" y="520.500" width="74" height="20" rx="3" fill="url(#bt)" stroke="#003c74"/>
<text x="648" y="535">OK</text>

<!-- dropdown list -->
<rect class="cr" x="655.500" y="465.500" width="187" height="118" fill="#fff" stroke="#000"/>
<rect class="cr" x="657" y="557" width="185" height="13" fill="#3a6bc0"/>
<rect class="cr" x="657.500" y="557.500" width="184" height="12" fill="none" stroke="#c8a050" stroke-dasharray="1 1"/>
<text class="l" x="658" y="477">Close</text>
<text class="l" x="658" y="490">Open</text>
<text class="l" x="658" y="503">High</text>
<text class="l" x="658" y="516">Low</text>
<text class="l" x="658" y="529">Median Price (HL/2)</text>
<text class="l" x="658" y="542">Typical Price (HLC/3)</text>
<text class="l" x="658" y="555">Weighted Close (HLCC/4)</text>
<text class="l" x="658" y="568" style="fill:#fff">Previous Indicator's Data</text>
<text class="l" x="658" y="581">First Indicator's Data</text>

<!-- marker strokes -->
<g fill="none" stroke="#8680c0" stroke-linecap="round">
<path d="M652 402.500h30" stroke-width="9"/>
<path d="M804 552l18-29" stroke-width="8"/>
<path d="M661 575.500h126" stroke-width="8"/>
<path d="M661 577h16" stroke-width="9"/>
</g>
</svg>
</body>
</html>
